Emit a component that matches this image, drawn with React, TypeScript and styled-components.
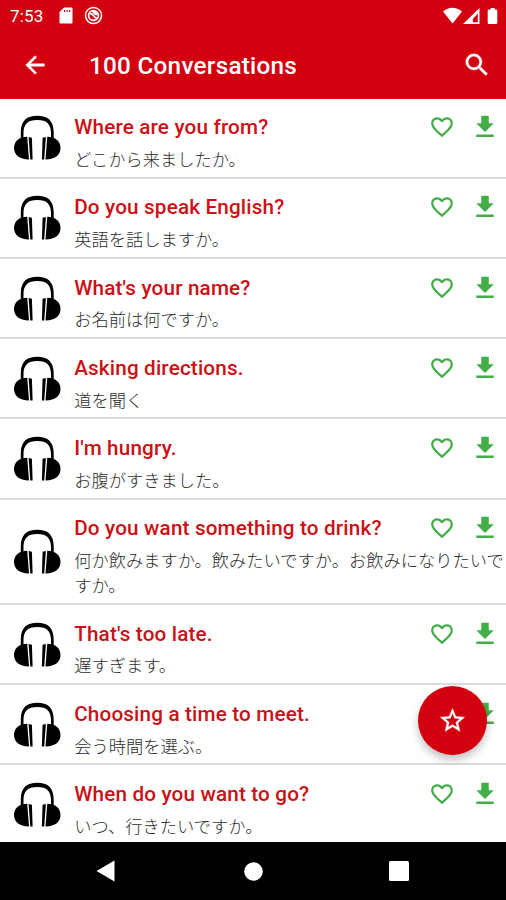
import React from "react";
import styled, { createGlobalStyle } from "styled-components";

const RED = "#d3000f";
const GREEN = "#43ae47";

const GlobalStyle = createGlobalStyle`
  * { box-sizing: border-box; }
  body { margin: 0; background: #fff; }
`;

const Screen = styled.div`
  position: relative;
  display: flex;
  flex-direction: column;
  width: 506px;
  height: 900px;
  overflow: hidden;
  background: #fff;
  font-family: Roboto, "Noto Sans CJK JP", sans-serif;
`;

const Header = styled.header`
  flex: none;
  height: 98.6px;
  background: ${RED};
  color: #fff;
`;

const StatusBar = styled.div`
  display: flex;
  align-items: center;
  height: 31px;
  padding: 0 7px 0 10px;
`;

const Clock = styled.span`
  width: 49px;
  font-size: 17px;
  line-height: 20px;
  letter-spacing: 0.2px;
`;

const StatusGroup = styled.div<{ $end?: boolean }>`
  display: flex;
  align-items: center;
  gap: ${(p) => (p.$end ? 0 : 11)}px;
  margin-left: ${(p) => (p.$end ? "auto" : 0)};
`;

const Toolbar = styled.div`
  display: flex;
  align-items: center;
  height: 67px;
  padding: 0 14px 0 21px;
`;

const Title = styled.h1`
  flex: 1;
  margin: 2px 0 0 40px;
  font-size: 24.3px;
  font-weight: 500;
  line-height: 28px;
  letter-spacing: 0.25px;
`;

const ToolButton = styled.button`
  display: flex;
  padding: 0;
  border: 0;
  background: none;
  color: #fff;
`;

const List = styled.main`
  flex: 1;
  min-height: 0;
  overflow: hidden;
`;

const Row = styled.article`
  display: flex;
  align-items: center;
  min-height: 80.2px;
  padding-left: 14px;
  border-bottom: 2px solid #dcdcdc;
`;

const Body = styled.div`
  flex: 1;
  min-width: 0;
  margin-left: 13.7px;
  padding: 14px 0 5.6px;
`;

const TopLine = styled.div`
  display: flex;
  align-items: center;
  height: 33.4px;
  padding-bottom: 4px;
`;

const Phrase = styled.h2`
  flex: 1;
  margin: 0;
  color: #cb1016;
  font-size: 20.7px;
  font-weight: 500;
  line-height: 28px;
  letter-spacing: 0.16px;
  white-space: nowrap;
`;

const Actions = styled.div`
  display: flex;
  align-items: center;
  gap: 15.5px;
  padding-right: 6px;
  color: ${GREEN};
`;

const Translation = styled.p`
  margin: 0;
  margin-right: -2px;
  color: #2c2c2c;
  font-family: "Noto Sans CJK JP", sans-serif;
  font-size: 17.25px;
  font-weight: 300;
  line-height: 25.2px;
`;

const Fab = styled.button`
  position: absolute;
  left: 418px;
  top: 686px;
  display: flex;
  align-items: center;
  justify-content: center;
  width: 69px;
  height: 69px;
  padding: 0;
  border: 0;
  border-radius: 50%;
  background: ${RED};
  color: #fff;
  box-shadow: 0 5px 9px rgba(0, 0, 0, 0.24);
`;

const NavBar = styled.nav`
  flex: none;
  display: flex;
  align-items: center;
  justify-content: space-between;
  height: 58px;
  padding: 0 97px 0 96px;
  background: #000;
`;

const Icon = ({ d, size, weight = 0 }: { d: string; size: number; weight?: number }) => (
  <svg
    width={size}
    height={size}
    viewBox="0 0 24 24"
    fill="currentColor"
    stroke="currentColor"
    strokeWidth={weight}
  >
    <path d={d} />
  </svg>
);

const PATHS = {
  back: "M20 11H7.83l5.59-5.59L12 4l-8 8 8 8 1.41-1.41L7.83 13H20v-2z",
  search:
    "M15.5 14h-.79l-.28-.27A6.471 6.471 0 0 0 16 9.5 6.5 6.5 0 1 0 9.5 16c1.61 0 3.09-.59 4.23-1.57l.27.28v.79l5 4.99L20.49 19l-4.99-5zm-6 0C7.01 14 5 11.99 5 9.5S7.01 5 9.5 5 14 7.01 14 9.5 11.99 14 9.5 14z",
  heart:
    "M16.5 3c-1.74 0-3.41.81-4.5 2.09C10.91 3.81 9.24 3 7.5 3 4.42 3 2 5.42 2 8.5c0 3.78 3.4 6.86 8.55 11.54L12 21.35l1.45-1.32C18.6 15.36 22 12.28 22 8.5 22 5.42 19.58 3 16.5 3zm-4.4 15.55l-.1.1-.1-.1C7.14 14.24 4 11.39 4 8.5 4 6.5 5.5 5 7.5 5c1.54 0 3.04.99 3.57 2.36h1.87C13.46 5.99 14.96 5 16.5 5c2 0 3.5 1.5 3.5 3.5 0 2.89-3.14 5.74-7.9 10.05z",
  download: "M19 9h-4V3H9v6H5l7 7 7-7zM5 18v2h14v-2H5z",
  star: "M22 9.24l-7.19-.62L12 2 9.19 8.63 2 9.24l5.46 4.73L5.82 21 12 17.27 18.18 21l-1.63-7.03L22 9.24zM12 15.4l-3.76 2.27 1-4.28-3.32-2.88 4.38-.38L12 6.1l1.71 4.04 4.38.38-3.32 2.88 1 4.28L12 15.4z",
};

const Headphones = () => (
  <svg width="46.5" height="45" viewBox="0 0 46.5 45">
    <path d="M6.800 23V17.500C6.800 5.500 13 .8 23.250 .8S39.700 5.500 39.700 17.500V23H37V18C37 9.500 33 5 23.250 5S9.500 9.500 9.500 18V23z" />
    <path d="M13.200 21.700C4.200 21.700 0 27 0 33 0 39.500 5 44.400 15 44.400z" />
    <path d="M14.600 22l3.300 .8.700 21.600h-2.300z" />
    <path d="M33.300 21.700C42.300 21.700 46.500 27 46.500 33 46.500 39.500 41.500 44.400 31.500 44.400z" />
    <path d="M31.900 22l-3.300 .8-.7 21.600h2.300z" />
  </svg>
);

const SdCard = () => (
  <svg width="14" height="17" viewBox="0 0 14 17">
    <path
      fill="#fff"
      fillRule="evenodd"
      d="M5 .5h7.500q1 0 1 1V15.500q0 1-1 1h-11q-1 0-1-1V5zM5 3v2h1.200V3zM7.500 3v2h1.200V3zM10 3v2h1.200V3z"
    />
  </svg>
);

const SyncDisc = () => (
  <svg width="19" height="19" viewBox="0 0 19 19" fill="none" stroke="#fff">
    <circle cx="9.500" cy="9.500" r="8" strokeWidth="1.500" />
    <circle cx="9.500" cy="9.500" r="4.900" strokeWidth="1.700" />
    <path d="M5.500 7.500q3 0 4 2t3.500 3" strokeWidth="1.700" />
    <path d="M7 5h5l2 4.500-3-.5z" fill="#fff" stroke="none" />
  </svg>
);

const Signals = () => (
  <svg width="56" height="18" viewBox="0 0 56 18" fill="#fff">
    <path d="M0 4.500Q9.500-3 19 4.500L9.500 16.500z" />
    <path fillRule="evenodd" d="M36.500 1v16H20zM34.800 6.500l-5 5.500v3.200h5z" />
    <path d="M45.700 2.600h2V1h4v1.600h1.300q1.300 0 1.300 1.300v11.800q0 1.300-1.300 1.300h-7q-1.300 0-1.300-1.300V3.900q0-1.300 1-1.300z" />
  </svg>
);

const LESSONS = [
  ["Where are you from?", "どこから来ましたか。"],
  ["Do you speak English?", "英語を話しますか。"],
  ["What's your name?", "お名前は何ですか。"],
  ["Asking directions.", "道を聞く"],
  ["I'm hungry.", "お腹がすきました。"],
  [
    "Do you want something to drink?",
    "何か飲みますか。飲みたいですか。お飲みになりたいですか。",
  ],
  ["That's too late.", "遅すぎます。"],
  ["Choosing a time to meet.", "会う時間を選ぶ。"],
  ["When do you want to go?", "いつ、行きたいですか。"],
];

export default function App() {
  return (
    <Screen>
      <GlobalStyle />
      <Header>
        <StatusBar>
          <Clock>7:53</Clock>
          <StatusGroup>
            <SdCard />
            <SyncDisc />
          </StatusGroup>
          <StatusGroup $end>
            <Signals />
          </StatusGroup>
        </StatusBar>
        <Toolbar>
          <ToolButton aria-label="Back">
            <Icon d={PATHS.back} size={28} weight={0.4} />
          </ToolButton>
          <Title>100 Conversations</Title>
          <ToolButton aria-label="Search">
            <Icon d={PATHS.search} size={30} weight={0.3} />
          </ToolButton>
        </Toolbar>
      </Header>
      <List>
        {LESSONS.map(([phrase, translation]) => (
          <Row key={phrase}>
            <Headphones />
            <Body>
              <TopLine>
                <Phrase>{phrase}</Phrase>
                <Actions>
                  <Icon d={PATHS.heart} size={26} />
                  <Icon d={PATHS.download} size={30} />
                </Actions>
              </TopLine>
              <Translation lang="ja">{translation}</Translation>
            </Body>
          </Row>
        ))}
      </List>
      <NavBar>
        <svg width="22" height="22" viewBox="0 0 22 22">
          <path d="M18.500.5v21L.5 11z" fill="#fff" />
        </svg>
        <svg width="19" height="19" viewBox="0 0 19 19">
          <circle cx="9.500" cy="9.500" r="9.300" fill="#fff" />
        </svg>
        <svg width="20" height="20" viewBox="0 0 20 20">
          <rect width="20" height="20" rx="1.500" fill="#fff" />
        </svg>
      </NavBar>
      <Fab aria-label="Favorites">
        <Icon d={PATHS.star} size={29} weight={0.3} />
      </Fab>
    </Screen>
  );
}
